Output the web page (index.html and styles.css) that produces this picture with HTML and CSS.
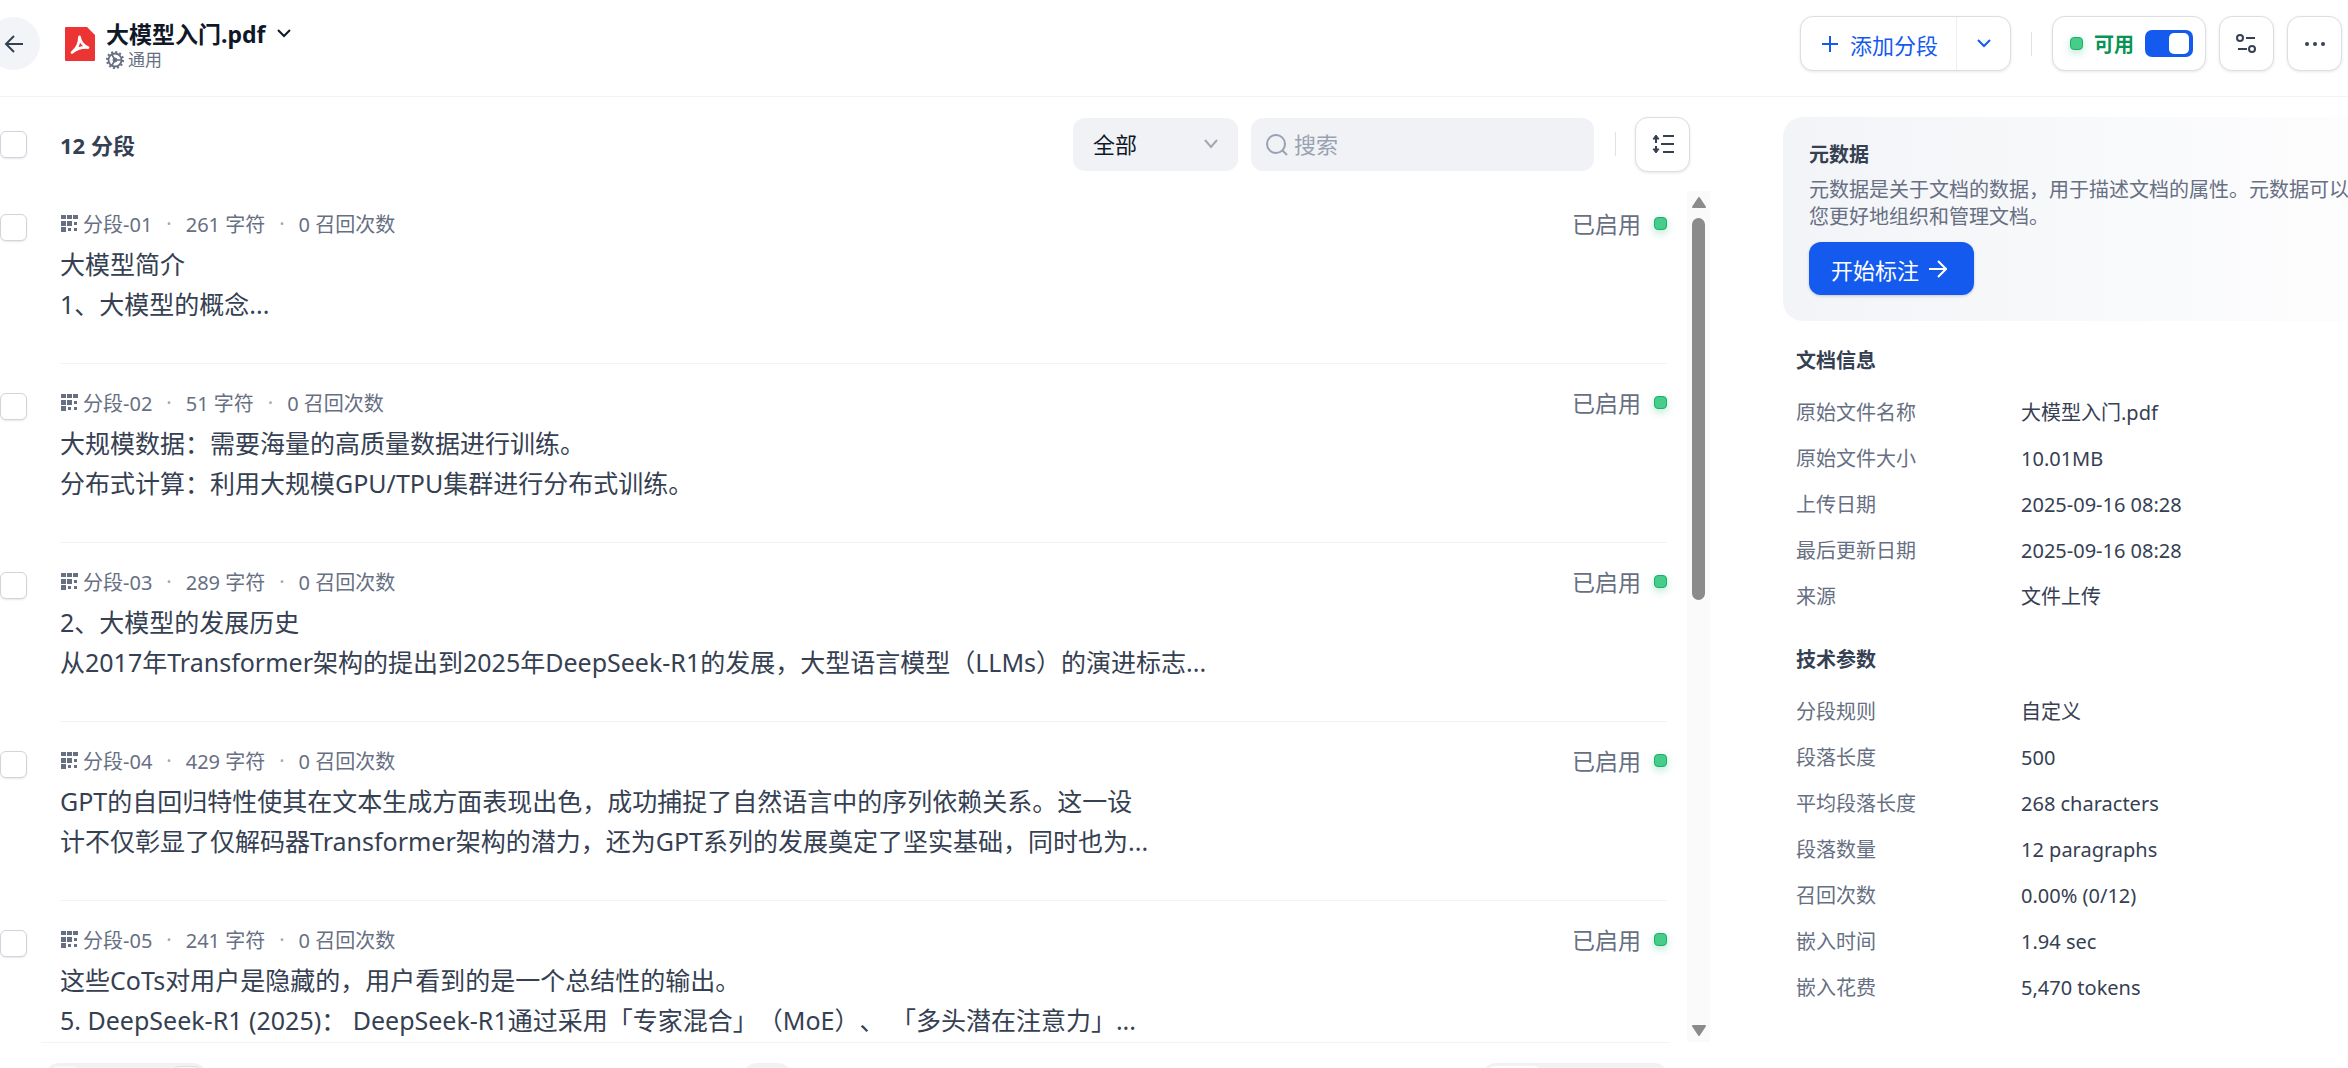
FILE: index.html
```html
<!DOCTYPE html>
<html lang="zh-CN">
<head>
<meta charset="utf-8">
<title>大模型入门.pdf</title>
<link rel="stylesheet" href="styles.css">
</head>
<body>
<svg class="defs" aria-hidden="true">
  <symbol id="grid" viewBox="0 0 17 17"><path fill="currentColor" d="M0 0h5v4H0zM6 0h5v4H6zM12 0h5v4h-5zM0 6h5v5H0zM6 6h5v5H6zM13 7h3v3h-3zM0 12h5v5H0zM7 13h3v3H7zM13 13h3v3h-3z"/></symbol>
</svg>
<div class="app">
  <header class="topbar">
    <button class="back" aria-label="返回"><svg width="20" height="18" viewBox="0 0 20 18"><path d="M19 9H2M10 1 2 9l8 8" fill="none" stroke="currentColor" stroke-width="2"/></svg></button>
    <svg class="pdf" width="30" height="34" viewBox="0 0 30 34"><path d="M1 0h21l8 8v25a1 1 0 0 1-1 1H1a1 1 0 0 1-1-1V1a1 1 0 0 1 1-1z" fill="#ec3434"/><path d="M14.500 10c0 6-3 12-7.500 15.500C11 22 17 20 23 20.500 18.500 19 15 14.500 14.500 10z" fill="none" stroke="#fff" stroke-width="2.800" stroke-linejoin="round"/></svg>
    <div class="doc">
      <button class="doc-name">大模型入门.pdf<svg width="14" height="9" viewBox="0 0 14 9"><path d="M1 1l6 6 6-6" fill="none" stroke="currentColor" stroke-width="2"/></svg></button>
      <div class="doc-mode"><svg width="18" height="18" viewBox="0 0 18 18" fill="none" stroke="currentColor"><circle cx="9" cy="9" r="6.500" stroke-width="1.800"/><circle cx="9" cy="9" r="8" stroke-width="2" stroke-dasharray="2 2.190"/><circle cx="9" cy="9" r="2" fill="currentColor"/><path d="M9 9h7M9 9 5.500 3M9 9l-3.500 6" stroke-width="1.600"/></svg>通用</div>
    </div>
    <div class="actions">
      <div class="split">
        <button class="add"><svg width="16" height="16" viewBox="0 0 16 16"><path d="M8 0v16M0 8h16" stroke="currentColor" stroke-width="2"/></svg>添加分段</button>
        <button class="add-more" aria-label="更多添加方式"><svg width="14" height="9" viewBox="0 0 14 9"><path d="M1 1l6 6 6-6" fill="none" stroke="currentColor" stroke-width="2"/></svg></button>
      </div>
      <span class="vline"></span>
      <label class="status"><i class="dot"></i>可用<input class="switch" type="checkbox" role="switch" checked></label>
      <button class="square" aria-label="设置"><svg width="21" height="20" viewBox="0 0 21 20" fill="none" stroke="currentColor" stroke-width="2"><circle cx="4" cy="4" r="3"/><path d="M10 4h9M2 15h9"/><circle cx="16" cy="15" r="3"/></svg></button>
      <button class="square" aria-label="更多"><svg width="20" height="4" viewBox="0 0 20 4" fill="currentColor"><circle cx="2" cy="2" r="2"/><circle cx="10" cy="2" r="2"/><circle cx="18" cy="2" r="2"/></svg></button>
    </div>
  </header>

  <div class="body">
    <main class="main">
      <div class="toolbar">
        <input class="tick" type="checkbox" aria-label="全选">
        <h2 class="count">12 分段</h2>
        <div class="select-wrap"><select class="select" aria-label="筛选"><option>全部</option></select><svg width="14" height="10" viewBox="0 0 14 10"><path d="M1 1l6 7 6-7" fill="none" stroke="#a2a8b3" stroke-width="2"/></svg></div>
        <div class="search"><svg width="23" height="23" viewBox="0 0 23 23"><path d="M17 17l5 5" stroke="currentColor" stroke-width="2"/><circle cx="11" cy="11" r="9" fill="none" stroke="currentColor" stroke-width="2"/></svg><input type="text" placeholder="搜索" aria-label="搜索"></div>
        <span class="vline"></span>
        <button class="square" aria-label="展开分段"><svg width="22" height="20" viewBox="0 0 22 20" fill="none" stroke="currentColor" stroke-width="2"><path d="M11 2h11M9 10h13M11 18h11M4 9V2M4 12v6"/><path d="M4 1 1 5h6zM4 19l-3-4h6z" fill="currentColor" stroke-width="1"/></svg></button>
      </div>

      <div class="list">
        <div class="rows">
          <article class="row">
            <input class="tick" type="checkbox" aria-label="分段-01">
            <div class="seg">
              <div class="meta"><svg class="g"><use href="#grid"/></svg><span>分段-01</span><b>·</b><span>261 字符</span><b>·</b><span>0 召回次数</span><span class="on">已启用<i class="dot"></i></span></div>
              <p>大模型简介<br>1、大模型的概念...</p>
            </div>
          </article>
          <article class="row">
            <input class="tick" type="checkbox" aria-label="分段-02">
            <div class="seg">
              <div class="meta"><svg class="g"><use href="#grid"/></svg><span>分段-02</span><b>·</b><span>51 字符</span><b>·</b><span>0 召回次数</span><span class="on">已启用<i class="dot"></i></span></div>
              <p>大规模数据：需要海量的高质量数据进行训练。<br>分布式计算：利用大规模GPU/TPU集群进行分布式训练。</p>
            </div>
          </article>
          <article class="row">
            <input class="tick" type="checkbox" aria-label="分段-03">
            <div class="seg">
              <div class="meta"><svg class="g"><use href="#grid"/></svg><span>分段-03</span><b>·</b><span>289 字符</span><b>·</b><span>0 召回次数</span><span class="on">已启用<i class="dot"></i></span></div>
              <p>2、大模型的发展历史<br>从2017年Transformer架构的提出到2025年DeepSeek-R1的发展，大型语言模型（LLMs）的演进标志...</p>
            </div>
          </article>
          <article class="row">
            <input class="tick" type="checkbox" aria-label="分段-04">
            <div class="seg">
              <div class="meta"><svg class="g"><use href="#grid"/></svg><span>分段-04</span><b>·</b><span>429 字符</span><b>·</b><span>0 召回次数</span><span class="on">已启用<i class="dot"></i></span></div>
              <p>GPT的自回归特性使其在文本生成方面表现出色，成功捕捉了自然语言中的序列依赖关系。这一设<br>计不仅彰显了仅解码器Transformer架构的潜力，还为GPT系列的发展奠定了坚实基础，同时也为...</p>
            </div>
          </article>
          <article class="row">
            <input class="tick" type="checkbox" aria-label="分段-05">
            <div class="seg">
              <div class="meta"><svg class="g"><use href="#grid"/></svg><span>分段-05</span><b>·</b><span>241 字符</span><b>·</b><span>0 召回次数</span><span class="on">已启用<i class="dot"></i></span></div>
              <p>这些CoTs对用户是隐藏的，用户看到的是一个总结性的输出。<br>5. DeepSeek-R1 (2025)： DeepSeek-R1通过采用「专家混合」（MoE）、 「多头潜在注意力」...</p>
            </div>
          </article>
        </div>
        <div class="scrollbar">
          <svg width="14" height="11" viewBox="0 0 14 11"><path d="M7 1 13 10H1z" fill="#8b8b8b" stroke="#8b8b8b" stroke-linejoin="round" stroke-width="2"/></svg>
          <span class="thumb"></span>
          <svg width="14" height="11" viewBox="0 0 14 11"><path d="M7 10 13 1H1z" fill="#8b8b8b" stroke="#8b8b8b" stroke-linejoin="round" stroke-width="2"/></svg>
        </div>
      </div>

      <footer class="pager">
        <div class="pill nav"><span></span><span class="next"></span></div>
        <div class="pill page"></div>
        <div class="pill sizes"><span></span></div>
      </footer>
    </main>

    <aside class="side">
      <section class="card">
        <h3>元数据</h3>
        <p>元数据是关于文档的数据，用于描述文档的属性。元数据可以帮<br>您更好地组织和管理文档。</p>
        <button class="primary">开始标注<svg width="18" height="18" viewBox="0 0 18 18"><path d="M0 9h16M9 1l8 8-8 8" fill="none" stroke="currentColor" stroke-width="2"/></svg></button>
      </section>
      <section class="info">
        <h3>文档信息</h3>
        <dl>
          <dt>原始文件名称</dt><dd>大模型入门.pdf</dd>
          <dt>原始文件大小</dt><dd>10.01MB</dd>
          <dt>上传日期</dt><dd>2025-09-16 08:28</dd>
          <dt>最后更新日期</dt><dd>2025-09-16 08:28</dd>
          <dt>来源</dt><dd>文件上传</dd>
        </dl>
      </section>
      <section class="info">
        <h3>技术参数</h3>
        <dl>
          <dt>分段规则</dt><dd>自定义</dd>
          <dt>段落长度</dt><dd>500</dd>
          <dt>平均段落长度</dt><dd>268 characters</dd>
          <dt>段落数量</dt><dd>12 paragraphs</dd>
          <dt>召回次数</dt><dd>0.00% (0/12)</dd>
          <dt>嵌入时间</dt><dd>1.94 sec</dd>
          <dt>嵌入花费</dt><dd>5,470 tokens</dd>
        </dl>
      </section>
    </aside>
  </div>
</div>
</body>
</html>
```
FILE: styles.css
```css
* { box-sizing: border-box; }
body {
  margin: 0;
  font-family: "Noto Sans", "Noto Sans CJK SC", sans-serif;
  font-size: 20px;
  color: #354052;
  background: #fff;
  text-spacing-trim: space-all;
}
button, input, select { font: inherit; color: inherit; }
button { padding: 0; border: 0; background: none; }
h2, h3, p, dl, dd { margin: 0; }
svg { display: block; flex: none; }
.defs { position: absolute; width: 0; height: 0; }
.app { height: 100vh; overflow: hidden; display: flex; flex-direction: column; }

/* top bar */
.topbar {
  flex: none;
  display: flex;
  align-items: center;
  height: 97px;
  padding: 0 6px 9px 0;
  border-bottom: 1px solid #f2f3f5;
}
.back {
  display: grid;
  place-items: center;
  width: 53px;
  height: 53px;
  margin-left: -13px;
  border-radius: 50%;
  background: #f2f4f7;
}
.pdf { margin-left: 25px; }
.doc { margin-left: 11px; }
.doc-name {
  display: flex;
  align-items: center;
  gap: 12px;
  font-size: 23px;
  font-weight: 700;
  line-height: 32px;
  color: #101828;
}
.doc-mode {
  display: flex;
  align-items: center;
  gap: 4px;
  font-size: 17px;
  line-height: 20px;
  color: #676f83;
}
.actions { display: flex; align-items: center; gap: 13px; margin-left: auto; }
.split, .status, .square {
  display: flex;
  align-items: center;
  height: 55px;
  border: 1px solid #dcdee3;
  border-radius: 13px;
  background: #fff;
  box-shadow: 0 1px 3px #1018281a;
}
.split { color: #155aef; }
.add {
  display: flex;
  align-items: center;
  gap: 12px;
  height: 100%;
  padding: 0 18px 0 21px;
  border-right: 1px solid #eceef1;
  font-size: 22px;
}
.add-more { display: grid; place-items: center; width: 53px; height: 100%; }
.vline { width: 1px; height: 24px; margin: 0 7px; background: #e0e2e8; }
.status { gap: 11px; padding: 0 12px 0 17px; font-weight: 700; color: #079455; }
.square { justify-content: center; width: 55px; }
.dot {
  flex: none;
  width: 13px;
  height: 13px;
  border: 1px solid #17b26a;
  border-radius: 4px;
  background: #47cd89;
  box-shadow: 0 3px 8px #17b26a4d;
}
.switch {
  appearance: none;
  display: flex;
  justify-content: flex-end;
  width: 48px;
  height: 27px;
  margin: 0;
  padding: 3px 4px;
  border-radius: 7px;
  background: #155aef;
}
.switch::before { content: ""; width: 20px; border-radius: 5px; background: #fff; }

.body { flex: 1; min-height: 0; display: flex; }
.main { flex: 1; min-width: 0; display: flex; flex-direction: column; }

/* list toolbar */
.toolbar { flex: none; display: flex; align-items: center; height: 94px; padding-right: 20px; }
.tick {
  appearance: none;
  flex: none;
  width: 27px;
  height: 27px;
  margin: 0;
  border: 1px solid #d0d5dd;
  border-radius: 6px;
  background: #fff;
  box-shadow: 0 1px 2px #1018281a;
}
.count { margin: 0 auto 0 33px; font-size: 22px; font-weight: 700; }
.select-wrap {
  display: grid;
  align-items: center;
  width: 165px;
  margin-right: 13px;
}
.select-wrap > * { grid-area: 1 / 1; }
.select-wrap svg { justify-self: end; margin-right: 20px; pointer-events: none; }
.select {
  appearance: none;
  width: 100%;
  height: 53px;
  padding: 0 20px;
  border: 0;
  border-radius: 12px;
  background: #f1f2f6;
  font-size: 22px;
  color: #101828;
}
.search {
  display: flex;
  align-items: center;
  gap: 6px;
  width: 343px;
  height: 53px;
  margin-right: 14px;
  padding: 0 14px;
  border-radius: 12px;
  background: #f1f2f6;
  color: #98a2b2;
}
.search input {
  flex: 1;
  min-width: 0;
  padding: 0;
  border: 0;
  outline: 0;
  background: none;
  font-size: 22px;
}
.search input::placeholder { color: #98a2b2; }
.toolbar .vline { margin-right: 19px; }

/* segments */
.list { flex: 1; min-height: 0; display: flex; }
.rows { flex: 1; min-width: 0; overflow: hidden; padding-right: 20px; }
.row { display: flex; gap: 33px; height: 179px; }
.row .tick { margin-top: 23px; }
.seg { flex: 1; min-width: 0; height: 173px; padding-top: 16px; border-bottom: 1px solid #f2f3f5; }
.meta { display: flex; align-items: center; height: 32px; color: #676f83; }
.g { width: 17px; height: 17px; margin: 0 5px 0 1px; }
.meta b { margin: 0 14px; font-weight: 400; color: #a0a7b5; }
.on { display: flex; align-items: center; gap: 13px; margin-left: auto; font-size: 23px; }
.seg p { margin-top: 5px; font-size: 25px; line-height: 40px; white-space: nowrap; }
.scrollbar {
  flex: none;
  display: flex;
  flex-direction: column;
  align-items: center;
  width: 23px;
  padding: 6px 0;
  background: #fafafa;
}
.thumb { width: 13px; height: 382px; margin: 10px 0 auto; border-radius: 7px; background: #8b8b8b; }

/* pagination, cut by the window edge */
.pager {
  flex: none;
  display: flex;
  height: 26px;
  margin: 0 40px 0 41px;
  padding: 20px 2px 0 4px;
  border-top: 1px solid #f2f3f5;
  overflow: hidden;
}
.pill { display: flex; justify-content: space-between; height: 56px; padding: 3px; border-radius: 14px; background: #f1f2f6; }
.pill span { width: 34px; border-radius: 10px; background: #f8f9fb; }
.pill .next { border: 1px solid #dcdee3; }
.nav { width: 162px; }
.page { width: 49px; margin: 0 auto 0 33%; }
.sizes { width: 186px; }
.sizes span { width: 58px; background: #fff; }

/* side panel */
.side { flex: none; width: 638px; padding: 20px 0 0 73px; }
.card {
  padding: 24px 0 26px 26px;
  border-radius: 20px 0 0 20px;
  background: linear-gradient(90deg, #f2f4f7, #fdfdfe);
}
h3 { font-size: 20px; font-weight: 700; line-height: 28px; }
.card p { margin: 7px 0 12px; line-height: 27px; white-space: nowrap; color: #676f83; }
.primary {
  display: flex;
  align-items: center;
  gap: 10px;
  height: 53px;
  padding: 0 27px 0 22px;
  border-radius: 12px;
  background: #155aef;
  box-shadow: 0 1px 3px #10182833;
  font-size: 22px;
  color: #fff;
}
.info { padding: 26px 0 0 13px; }
.info dl { display: grid; grid-template-columns: 225px 1fr; margin-top: 15px; line-height: 46px; }
dt { color: #676f83; }
dd { color: #354052; }
```
